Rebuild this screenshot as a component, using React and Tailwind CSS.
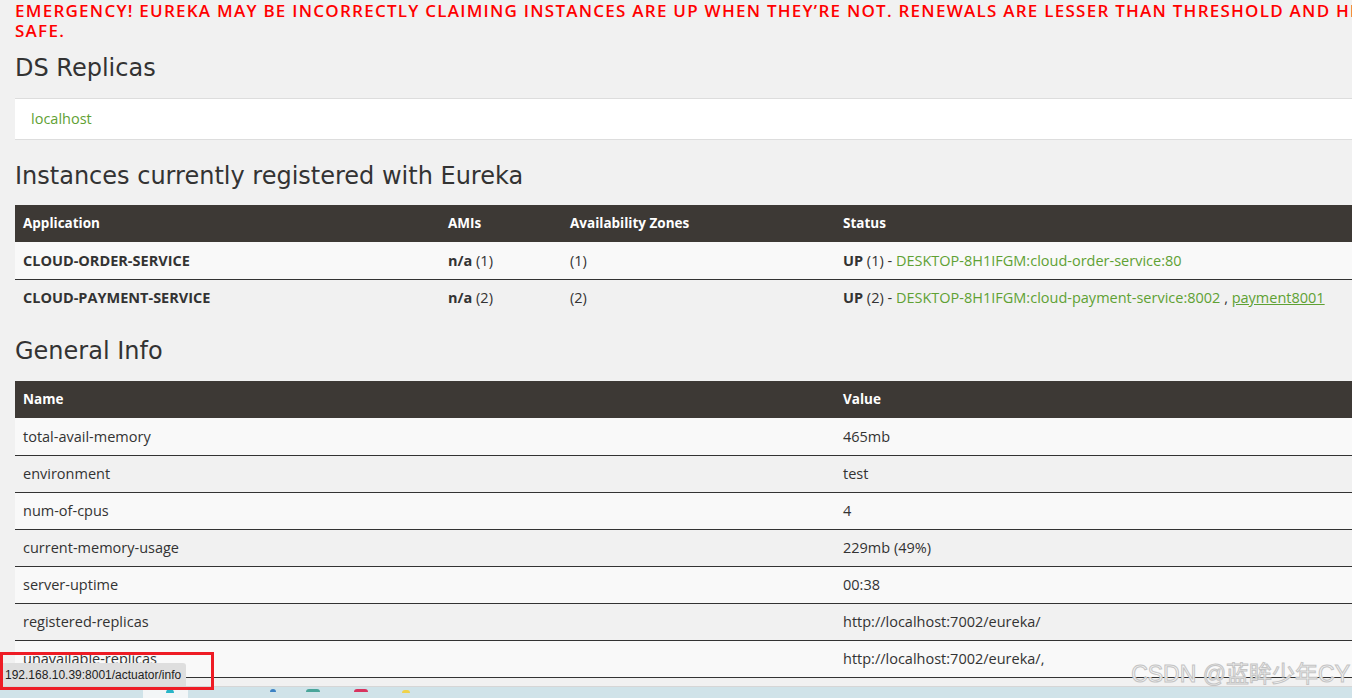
// Eureka dashboard - status page snapshot

const instances = [
  {
    app: "CLOUD-ORDER-SERVICE",
    amis: "(1)",
    zones: "(1)",
    up: "(1)",
    links: ["DESKTOP-8H1IFGM:cloud-order-service:80"],
  },
  {
    app: "CLOUD-PAYMENT-SERVICE",
    amis: "(2)",
    zones: "(2)",
    up: "(2)",
    links: ["DESKTOP-8H1IFGM:cloud-payment-service:8002", "payment8001"],
  },
];

const info = [
  ["total-avail-memory", "465mb"],
  ["environment", "test"],
  ["num-of-cpus", "4"],
  ["current-memory-usage", "229mb (49%)"],
  ["server-uptime", "00:38"],
  ["registered-replicas", "http://localhost:7002/eureka/"],
  ["unavailable-replicas", "http://localhost:7002/eureka/,"],
];

const App = () => {
  return (
    <div className="relative w-[1352px] h-[698px] overflow-hidden bg-[#f1f1f1] font-['Open_Sans',sans-serif] text-[14.5px] text-[#333]">
      <div className="w-[1500px] pl-[15px]">
        {/* Emergency banner */}
        <h4 className="pt-[1px] text-[17px] leading-[20px] font-semibold text-[#ff0000] whitespace-nowrap tracking-[1.25px]">
          EMERGENCY! EUREKA MAY BE INCORRECTLY CLAIMING INSTANCES ARE UP WHEN
          THEY’RE NOT. RENEWALS ARE LESSER THAN THRESHOLD AND HENCE THE
          INSTANCES ARE NOT BEING EXPIRED JUST TO BE
          <br />
          SAFE.
        </h4>

        {/* DS Replicas */}
        <h1 className="mt-[12px] text-[24px] leading-[30px] font-['DejaVu_Sans',sans-serif] text-[#333]">
          DS Replicas
        </h1>
        <div className="mt-[15px] h-[42px] w-[1400px] bg-white border-y border-[#dddddd] flex items-center pl-4">
          <a className="text-[#5fa134]">localhost</a>
        </div>

        {/* Instances */}
        <h1 className="mt-[21px] text-[24px] leading-[30px] font-['DejaVu_Sans',sans-serif] text-[#333]">
          Instances currently registered with Eureka
        </h1>
        <div className="mt-[14px] w-[1400px]">
          <div className="h-[37px] bg-[#3d3935] text-white text-[13.5px] font-bold flex items-center">
            <div className="w-[425px] pl-2">Application</div>
            <div className="w-[122px] pl-2">AMIs</div>
            <div className="w-[273px] pl-2">Availability Zones</div>
            <div className="pl-2">Status</div>
          </div>
          {instances.map((row, i) => (
            <div
              key={row.app}
              className={`h-[37px] flex items-center ${
                i === 0 ? "bg-[#f9f9f9]" : "bg-[#f1f1f1] border-t border-[#333]"
              }`}
            >
              <div className="w-[425px] pl-2 font-bold">{row.app}</div>
              <div className="w-[122px] pl-2">
                <b>n/a</b> {row.amis}
              </div>
              <div className="w-[273px] pl-2">{row.zones}</div>
              <div className="pl-2">
                <b>UP</b> {row.up} -{" "}
                <a className="text-[#5fa134]">{row.links[0]}</a>
                {row.links[1] && (
                  <>
                    {" , "}
                    <a className="text-[#5fa134] underline">{row.links[1]}</a>
                  </>
                )}
              </div>
            </div>
          ))}
        </div>

        {/* General info */}
        <h1 className="mt-[20px] text-[24px] leading-[30px] font-['DejaVu_Sans',sans-serif] text-[#333]">
          General Info
        </h1>
        <div className="mt-[15px] w-[1400px]">
          <div className="h-[37px] bg-[#3d3935] text-white text-[13.5px] font-bold flex items-center">
            <div className="w-[820px] pl-2">Name</div>
            <div className="pl-2">Value</div>
          </div>
          {info.map(([name, value], i) => (
            <div
              key={name}
              className={`h-[37px] flex items-center ${
                i % 2 === 0 ? "bg-[#f9f9f9]" : "bg-[#f1f1f1]"
              } ${i > 0 ? "border-t border-[#333]" : ""}`}
            >
              <div className="w-[820px] pl-2">{name}</div>
              <div className="pl-2">{value}</div>
            </div>
          ))}
          <div className="border-t border-[#333]" />
        </div>
      </div>

      {/* taskbar strip */}
      <div className="absolute left-0 right-0 bottom-0 h-[12px] border-t border-[#d6d6d6] bg-[#d0e3e9]">
        <div className="absolute left-[143px] top-0 w-[45px] h-full bg-[#f3f6f7]" />
        <span className="absolute left-[166px] top-[2px] w-[8px] h-[4px] rounded-t-full bg-[#28b5c8]" />
        <span className="absolute left-[270px] top-[2px] w-[6px] h-[3px] rounded-t-full bg-[#3c82c4]" />
        <span className="absolute left-[306px] top-[2px] w-[14px] h-[3px] rounded-t-full bg-[#4aa59a]" />
        <span className="absolute left-[354px] top-[2px] w-[14px] h-[3px] rounded-t-full bg-[#d8345f]" />
        <span className="absolute left-[402px] top-[3px] w-[8px] h-[3px] rounded-t-full bg-[#f0d24a]" />
      </div>

      {/* hovered link status bubble */}
      <div className="absolute left-0 top-[663px] h-[23px] px-[5px] flex items-center bg-[#dedede] rounded-tr-[3px] text-[12px] text-[#222] font-['Liberation_Sans',sans-serif]">
        192.168.10.39:8001/actuator/info
      </div>
      <div className="absolute left-0 top-[652px] w-[214px] h-[38px] border-[3px] border-[#ee1c25]" />

      {/* watermark */}
      <div className="absolute right-[2px] top-[660px] text-[23px] leading-[28px] text-[#f4f4f4] font-['Liberation_Sans','Noto_Sans_CJK_SC',sans-serif] [-webkit-text-stroke:1px_#c4c4c4]">
        CSDN @蓝眸少年CY
      </div>
    </div>
  );
};

export default App;
